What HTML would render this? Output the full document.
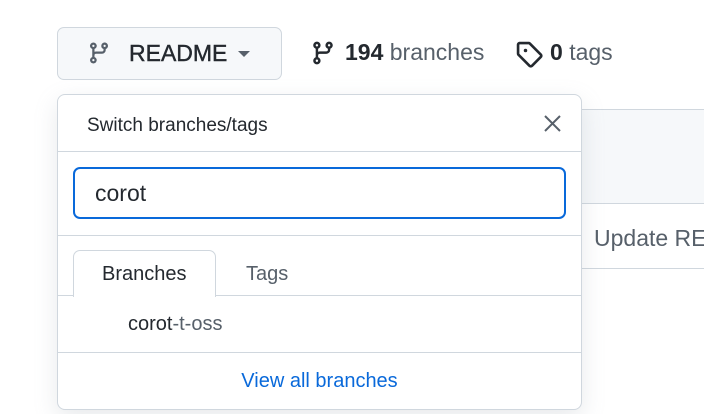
<!DOCTYPE html>
<html><head><style>
body{margin:0;width:704px;height:414px;background:#fff;font-family:"Liberation Sans",sans-serif;position:relative;overflow:hidden;color:#24292f}
.a{position:absolute;white-space:nowrap}
</style></head><body>
<div class="a" style="left:581px;top:109px;width:123px;height:94px;background:#f6f8fa;border-top:1px solid #d0d7de"></div>
<div class="a" style="left:581px;top:203px;width:123px;height:1px;background:#d0d7de"></div>
<div class="a" style="left:581px;top:268px;width:123px;height:1px;background:#d0d7de"></div>
<div class="a" style="left:581px;top:220px;width:123px;height:40px;overflow:hidden"><div class="a" style="left:13px;top:5px;font-size:23px;color:#57606a">Update RE</div></div>
<div class="a" style="left:57px;top:27px;width:223px;height:51px;background:#f6f8fa;border:1px solid #d0d7de;border-radius:7px"></div>
<svg class="a" style="left:87px;top:40px" width="24" height="26" viewBox="0 0 16 16"><path fill="#57606a" d="M9.5 3.25a2.25 2.25 0 1 1 3 2.12V6A2.5 2.5 0 0 1 10 8.5H6a1 1 0 0 0-1 1v1.13a2.25 2.25 0 1 1-1.5 0V5.37a2.25 2.25 0 1 1 1.5 0v1.836A2.5 2.5 0 0 1 6 7h4a1 1 0 0 0 1-1v-.63A2.25 2.25 0 0 1 9.5 3.25Zm-6 0a.75.75 0 1 0 1.5 0 .75.75 0 0 0-1.5 0Zm8.25-.75a.75.75 0 1 0 0 1.5.75.75 0 0 0 0-1.5ZM4.25 12a.75.75 0 1 0 0 1.5.75.75 0 0 0 0-1.5Z"/></svg>
<div class="a" style="left:129px;top:40px;font-size:23px;-webkit-text-stroke:0.4px #24292f">README</div>
<div class="a" style="left:238px;top:51px;border-left:6px solid transparent;border-right:6px solid transparent;border-top:6px solid #57606a"></div>
<svg class="a" style="left:310px;top:40px" width="26" height="26" viewBox="0 0 16 16"><path fill="#24292f" d="M9.5 3.25a2.25 2.25 0 1 1 3 2.12V6A2.5 2.5 0 0 1 10 8.5H6a1 1 0 0 0-1 1v1.13a2.25 2.25 0 1 1-1.5 0V5.37a2.25 2.25 0 1 1 1.5 0v1.836A2.5 2.5 0 0 1 6 7h4a1 1 0 0 0 1-1v-.63A2.25 2.25 0 0 1 9.5 3.25Zm-6 0a.75.75 0 1 0 1.5 0 .75.75 0 0 0-1.5 0Zm8.25-.75a.75.75 0 1 0 0 1.5.75.75 0 0 0 0-1.5ZM4.25 12a.75.75 0 1 0 0 1.5.75.75 0 0 0 0-1.5Z"/></svg>
<div class="a" style="left:345px;top:39px;font-size:23px"><b style="font-weight:600">194</b> <span style="color:#57606a">branches</span></div>
<svg class="a" style="left:515px;top:40px" width="28" height="28" viewBox="0 0 16 16"><path fill="#24292f" d="M1 7.775V2.75C1 1.784 1.784 1 2.75 1h5.025c.464 0 .91.184 1.238.513l6.25 6.25a1.75 1.75 0 0 1 0 2.474l-5.026 5.026a1.75 1.75 0 0 1-2.474 0l-6.25-6.250A1.752 1.752 0 0 1 1 7.775Zm1.5 0c0 .066.026.13.073.177l6.25 6.25a.25.25 0 0 0 .354 0l5.025-5.025a.25.25 0 0 0 0-.354l-6.25-6.25a.25.25 0 0 0-.177-.073H2.75a.25.25 0 0 0-.25.25ZM6 5a1 1 0 1 1 0 2 1 1 0 0 1 0-2Z"/></svg>
<div class="a" style="left:550px;top:39px;font-size:23px"><b style="font-weight:600">0</b> <span style="color:#57606a">tags</span></div>
<div class="a" style="left:57px;top:94px;width:523px;height:314px;background:#fff;border:1px solid #d0d7de;border-radius:8px;box-shadow:0 8px 24px rgba(140,149,159,.2)">
 <div class="a" style="left:29px;top:20px;font-size:19px">Switch branches/tags</div>
 <svg class="a" style="left:486px;top:20px" width="17" height="17" viewBox="0 0 17 17"><path d="M1 1L16 16M16 1L1 16" stroke="#57606a" stroke-width="2"/></svg>
 <div class="a" style="left:0;top:56px;width:523px;height:1px;background:#d0d7de"></div>
 <div class="a" style="left:15px;top:72px;width:489px;height:48px;border:2px solid #0969da;border-radius:7px"></div>
 <div class="a" style="left:37px;top:85px;font-size:23px">corot</div>
 <div class="a" style="left:0;top:140px;width:523px;height:1px;background:#d0d7de"></div>
 <div class="a" style="left:0;top:200px;width:523px;height:1px;background:#d0d7de"></div>
 <div class="a" style="left:15px;top:155px;width:141px;height:46px;background:#fff;border:1px solid #d0d7de;border-bottom:none;border-radius:7px 7px 0 0"></div>
 <div class="a" style="left:44px;top:168px;font-size:20px">Branches</div>
 <div class="a" style="left:188px;top:168px;font-size:20px;color:#57606a">Tags</div>
 <div class="a" style="left:70px;top:218px;font-size:20px"><span>corot</span><span style="color:#57606a">-t-oss</span></div>
 <div class="a" style="left:0;top:257px;width:523px;height:1px;background:#d0d7de"></div>
 <div class="a" style="left:0;top:275px;width:523px;text-align:center;font-size:20px;color:#0969da">View all branches</div>
</div>
</body></html>
